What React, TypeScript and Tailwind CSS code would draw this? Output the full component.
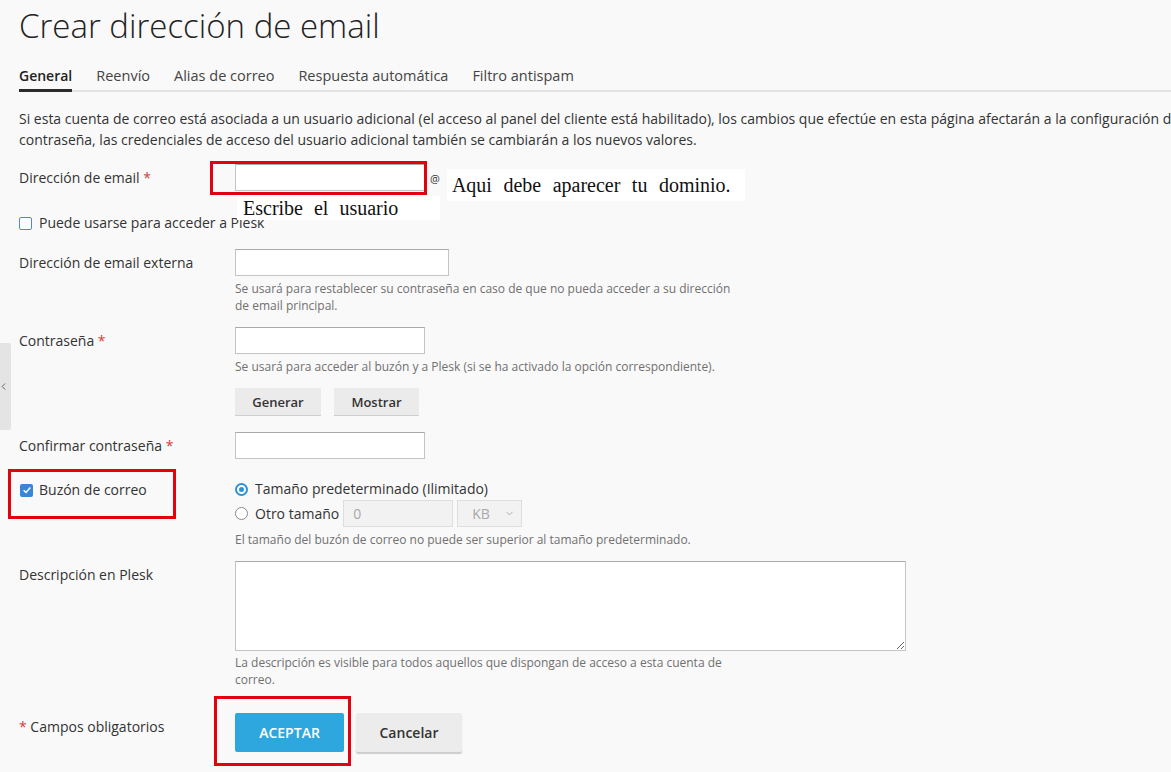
import { ChevronDown, ChevronLeft } from "lucide-react";

function Req() {
  return <span className="text-[#d0403a]"> *</span>;
}

function Hint({ children, className = "" }: { children: React.ReactNode; className?: string }) {
  return <div className={`text-[12px] leading-[17px] text-[#707070] ${className}`}>{children}</div>;
}

function TextInput({ w = "w-[190px]" }: { w?: string }) {
  return <div className={`${w} h-[27px] bg-white border border-[#c4c4c4] border-t-[#a9a9a9]`} />;
}

function GrayButton({ children, w }: { children: React.ReactNode; w: string }) {
  return (
    <button className={`${w} h-[27px] bg-[#ebebeb] shadow-[0_1px_0_#cfcfcf] text-[13px] font-semibold text-[#333]`}>
      {children}
    </button>
  );
}

function RedBox({ className }: { className: string }) {
  return <div className={`absolute border-[3px] border-[#e4000c] pointer-events-none ${className}`} />;
}

function Radio({ checked }: { checked?: boolean }) {
  return (
    <span
      className={`w-[13px] h-[13px] rounded-full bg-white flex items-center justify-center shrink-0 ${
        checked ? "border-2 border-[#2d8fd8]" : "border border-[#8a8a8a]"
      }`}
    >
      {checked && <span className="w-[5px] h-[5px] rounded-full bg-[#2d8fd8]" />}
    </span>
  );
}

export default function App() {
  const tabs = ["General", "Reenvío", "Alias de correo", "Respuesta automática", "Filtro antispam"];

  return (
    <div className="relative min-h-[772px] overflow-hidden bg-[#f9f9f9] pl-[19px] font-['Open_Sans',sans-serif] text-[#333]">
      {/* side toggle */}
      <div className="absolute left-0 top-[343px] w-[11px] h-[87px] bg-[#e4e4e4] rounded-r-[2px] flex items-center justify-center">
        <ChevronLeft className="w-[11px] h-[11px] text-[#555] -ml-[4px]" strokeWidth={2} />
      </div>

      <h1 className="pt-[5px] text-[33px] leading-[41px] font-light text-[#222]">Crear dirección de email</h1>

      <div className="mt-[20px] flex gap-6 border-b-2 border-[#e2e2e2] text-[14.5px] leading-[20px]">
        {tabs.map((t, i) => (
          <div
            key={t}
            className={`pb-[3px] -mb-[2px] border-b-[3px] ${
              i === 0 ? "border-[#2b2b2b] font-semibold text-[#222] text-[14px]" : "border-transparent text-[#444]"
            }`}
          >
            {t}
          </div>
        ))}
      </div>

      <p className="mt-[16px] text-[14px] leading-[21px] whitespace-nowrap text-[#333]">
        Si esta cuenta de correo está asociada a un usuario adicional (el acceso al panel del cliente está habilitado), los cambios que efectúe en esta página afectarán a la configuración del usuario adicional. Si cambia la
        <br />
        contraseña, las credenciales de acceso del usuario adicional también se cambiarán a los nuevos valores.
      </p>

      <div className="text-[14px] leading-[20px]">
        {/* email */}
        <div className="mt-[14px] h-[27px] flex items-start">
          <div className="w-[216px] shrink-0 pt-[4px]">
            Dirección de email<Req />
          </div>
          <div className="relative">
            <TextInput />
            <RedBox className="-left-[25px] -top-[3px] w-[217px] h-[34px]" />
            <div className="absolute left-[2px] top-[32px] bg-white pl-[6px] pr-[42px] whitespace-nowrap font-['Liberation_Serif',serif] text-[20px] leading-[24px] text-[#111] [word-spacing:6px]">
              Escribe el usuario
            </div>
          </div>
          <span className="ml-[5px] mt-[9px] text-[11px] leading-[12px] text-[#333]">@</span>
          <div className="ml-[7px] mt-[5px] bg-white pl-[5px] pr-[14px] h-[32px] flex items-center whitespace-nowrap font-['Liberation_Serif',serif] text-[20px] text-[#111] [word-spacing:6.5px]">
            Aqui debe aparecer tu dominio.
          </div>
        </div>

        {/* plesk access */}
        <div className="mt-[22px] flex items-center gap-[7px] h-[20px]">
          <span className="w-[13px] h-[13px] rounded-[2px] border border-[#5b86c5] bg-white" />
          <span>Puede usarse para acceder a Plesk</span>
        </div>

        {/* external */}
        <div className="mt-[16px] flex items-start">
          <div className="w-[216px] shrink-0 pt-[4px]">Dirección de email externa</div>
          <div>
            <TextInput w="w-[214px]" />
            <Hint className="mt-[4px] w-[500px]">
              Se usará para restablecer su contraseña en caso de que no pueda acceder a su dirección de email principal.
            </Hint>
          </div>
        </div>

        {/* password */}
        <div className="mt-[13px] flex items-start">
          <div className="w-[216px] shrink-0 pt-[4px]">
            Contraseña<Req />
          </div>
          <div>
            <TextInput />
            <Hint className="mt-[4px]">
              Se usará para acceder al buzón y a Plesk (si se ha activado la opción correspondiente).
            </Hint>
            <div className="mt-[13px] flex gap-[13px]">
              <GrayButton w="w-[86px]">Generar</GrayButton>
              <GrayButton w="w-[85px]">Mostrar</GrayButton>
            </div>
          </div>
        </div>

        {/* confirm */}
        <div className="mt-[17px] flex items-start">
          <div className="w-[216px] shrink-0 pt-[4px]">
            Confirmar contraseña<Req />
          </div>
          <TextInput />
        </div>

        {/* mailbox */}
        <div className="mt-[20px] flex items-start">
          <div className="relative w-[216px] shrink-0 pt-[1px] flex items-center gap-[6px]">
            <span className="ml-[1px] w-[13px] h-[13px] rounded-[2px] bg-[#3a86d6] flex items-center justify-center">
              <svg viewBox="0 0 12 12" className="w-[10px] h-[10px]">
                <path d="M2 6.2 L4.8 9 L10 3" fill="none" stroke="white" strokeWidth="1.8" />
              </svg>
            </span>
            <span>Buzón de correo</span>
            <RedBox className="-left-[11px] -top-[10px] w-[168px] h-[50px]" />
          </div>
          <div>
            <div className="flex items-center gap-[7px] h-[20px]">
              <Radio checked />
              <span>Tamaño predeterminado (Ilimitado)</span>
            </div>
            <div className="mt-[1px] flex items-center h-[27px]">
              <Radio />
              <span className="ml-[7px]">Otro tamaño</span>
              <div className="ml-[4px] w-[110px] h-[27px] bg-[#f2f2f2] border border-[#dedede] text-[#a8a8a8] pl-[9px] flex items-center">
                0
              </div>
              <div className="ml-[4px] w-[65px] h-[27px] bg-[#f2f2f2] border border-[#dedede] text-[#a8a8a8] flex items-center justify-between pl-[14px] pr-[6px]">
                <span>KB</span>
                <ChevronDown className="w-[11px] h-[11px]" />
              </div>
            </div>
            <Hint className="mt-[4px]">
              El tamaño del buzón de correo no puede ser superior al tamaño predeterminado.
            </Hint>
          </div>
        </div>

        {/* description */}
        <div className="mt-[13px] flex items-start">
          <div className="w-[216px] shrink-0 pt-[4px]">Descripción en Plesk</div>
          <div>
            <textarea className="block w-[671px] h-[90px] bg-white border border-[#c4c4c4] border-t-[#a9a9a9] outline-none" />
            <Hint className="mt-[3px] w-[500px]">
              La descripción es visible para todos aquellos que dispongan de acceso a esta cuenta de correo.
            </Hint>
          </div>
        </div>

        {/* actions */}
        <div className="mt-[25px] flex items-start">
          <div className="w-[216px] shrink-0 pt-[4px]">
            <span className="text-[#d0403a]">* </span>Campos obligatorios
          </div>
          <div className="flex gap-[12px]">
            <div className="relative">
              <button className="w-[109px] h-[39px] bg-[#2ea7df] rounded-[2px] text-white text-[14px] font-semibold uppercase">
                Aceptar
              </button>
              <RedBox className="-left-[21px] -top-[17px] w-[137px] h-[70px]" />
            </div>
            <button className="w-[106px] h-[39px] bg-[#ececec] rounded-[2px] shadow-[0_2px_1px_#cdcdcd] text-[14px] font-semibold text-[#333]">
              Cancelar
            </button>
          </div>
        </div>
      </div>
    </div>
  );
}
